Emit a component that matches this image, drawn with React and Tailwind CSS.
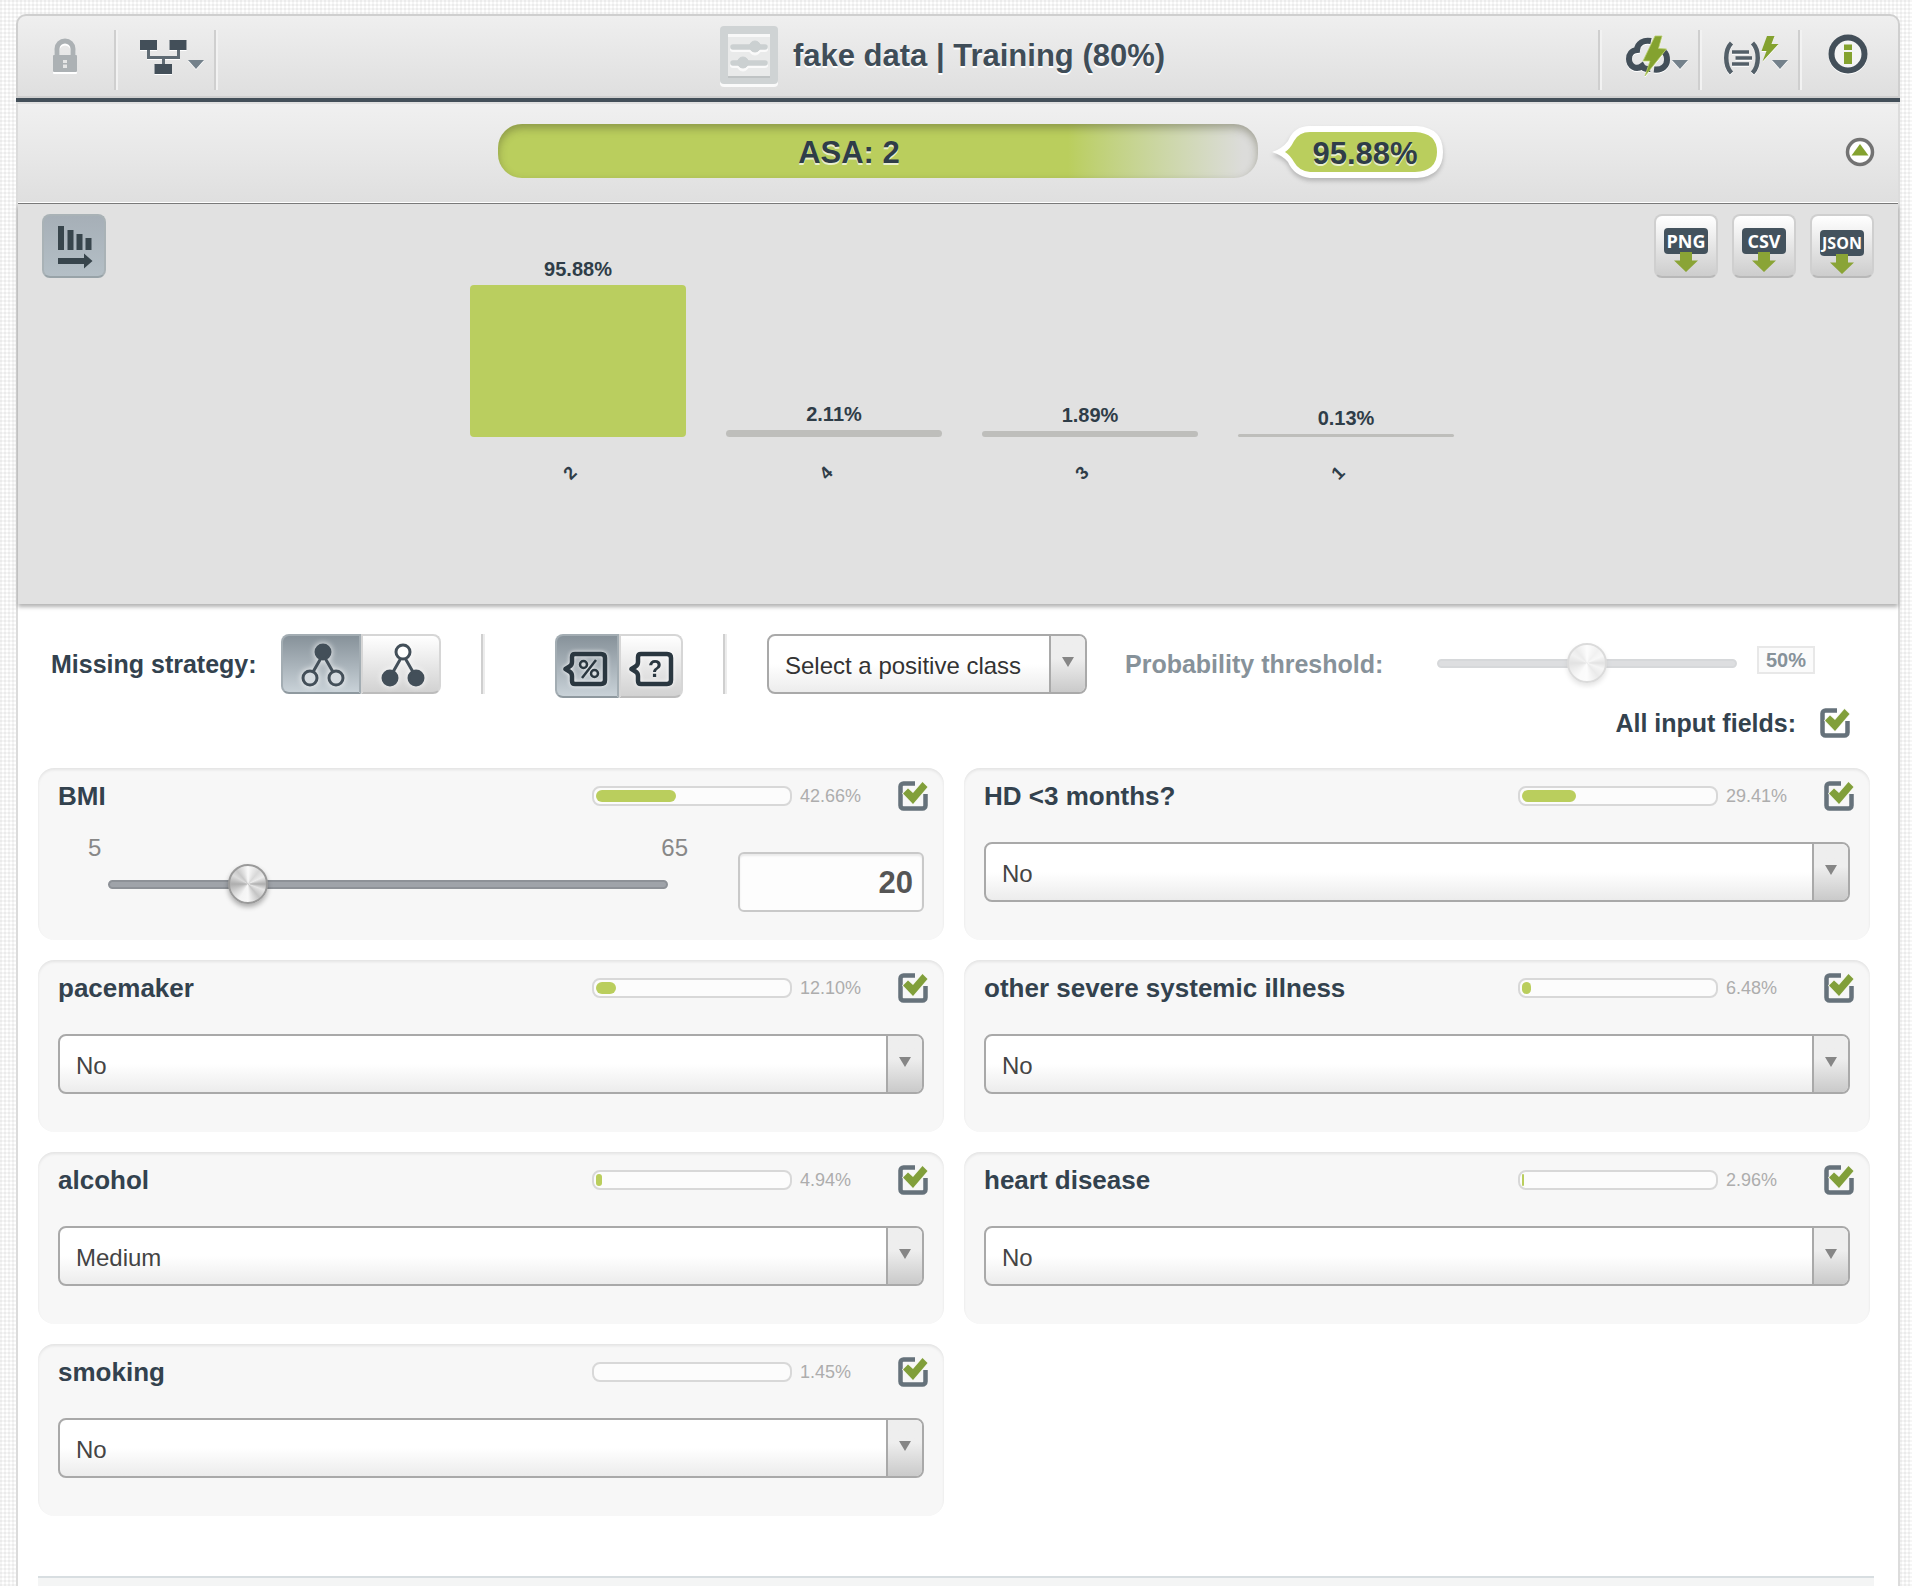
import { useState } from "react";

const DARK = "#434f59";
const GREEN = "#84a22f";

function Separator() {
  return <span className="h-[60px] w-1 shrink-0 border-l-2 border-r-2 border-l-[#cfcfcf] border-r-[#f2f2f2]" />;
}

function ToolButton({ label, children, className = "pl-5" }) {
  return (
    <button type="button" aria-label={label} className={`flex h-[60px] w-24 items-start pt-1 ${className}`}>
      {children}
    </button>
  );
}

function LockIcon() {
  return (
    <svg width="30" height="44" viewBox="0 0 30 44" className="drop-shadow-[0_2px_0_#fff]" aria-hidden="true">
      <path d="M7 23V15a8 8 0 0 1 16 0v8" fill="none" stroke="#acb1b4" strokeWidth="5" />
      <rect x="3" y="21" width="24" height="17" rx="1" fill="#acb1b4" />
      <path d="M13 26h4v3h-4zM13 30.500h4v3.500h-4z" fill="#e6e6e6" />
    </svg>
  );
}

function NetworkIcon() {
  return (
    <svg width="68" height="44" viewBox="-2 0 68 44" className="drop-shadow-[0_1px_0_#fff]" aria-hidden="true">
      <path d="M8.500 15v8.500h30V15M23.500 23v8" fill="none" stroke="#5f6b74" strokeWidth="3" />
      <path d="M0 6h17v10H0zM29.500 6h17v10h-17zM14.500 30H32v10H14.500z" fill={DARK} />
      <path d="M48 26h16l-8 9z" fill="#74818b" />
    </svg>
  );
}

function CloudIcon() {
  return (
    <svg width="68" height="44" viewBox="-2 0 68 44" className="drop-shadow-[0_1px_0_#fff]" aria-hidden="true">
      <path
        d="M27 7C20 5.500 13.500 9 13 16C7.500 16.500 5 20.500 5 25C5 32 12 36.500 18 32C19.500 34.500 22 35.500 26 35M30 35.500C39 36.500 43 31 43 26C43 22 42 19.500 40 18"
        fill="none"
        stroke={DARK}
        strokeWidth="6"
      />
      <path d="M31 2h7l-3.500 12.500 8 .5L21 42l5-15h-7z" fill={GREEN} stroke="#b7cd6c" strokeWidth="0.800" />
      <path d="M48 26h16l-8 9z" fill="#74818b" />
    </svg>
  );
}

function FormulaIcon() {
  return (
    <svg width="68" height="44" viewBox="0 0 68 44" className="drop-shadow-[0_1px_0_#fff]" aria-hidden="true">
      <path d="M9.500 9C2.500 16 2.500 32 9.500 39M30.500 9C37.500 16 37.500 32 30.500 39" fill="none" stroke="#535f68" strokeWidth="4.500" />
      <path d="M10 18h17M13.500 24H30M10 30h17" stroke="#535f68" strokeWidth="3.500" />
      <path d="M45 2h7.500L49.500 10h7L40.500 27.500 44.500 17h-5z" fill={GREEN} />
      <path d="M50 26h16l-8 9z" fill="#74818b" />
    </svg>
  );
}

function InfoIcon() {
  return (
    <svg width="44" height="44" viewBox="0 0 44 44" className="drop-shadow-[0_1px_0_#fff]" aria-hidden="true">
      <circle cx="22" cy="20" r="16.500" fill="#f4f4f4" stroke={DARK} strokeWidth="6" />
      <path d="M18 10.500h8v5.500h-8zM18 18h8v12h-8z" fill={GREEN} />
    </svg>
  );
}

function PanelIcon() {
  return (
    <svg width="60" height="64" viewBox="0 0 60 64" aria-hidden="true">
      <rect x="1" y="4" width="58" height="59" rx="4" fill="#fafafa" />
      <rect x="1" y="2" width="58" height="58" rx="4" fill="#cfd3d4" />
      <rect x="9" y="10" width="42" height="44" fill="#e9eaea" />
      <path d="M9 10h42v3H9z" fill="#f8f8f8" />
      <path d="M9 52h42v2H9z" fill="#bfc3c4" />
      <g fill="#fafafa" stroke="#fafafa" strokeLinecap="round">
        <path d="M14 25h32M14 41h32" strokeWidth="6" />
        <circle cx="36" cy="25" r="6" />
        <circle cx="24" cy="41" r="6" />
      </g>
      <g fill="#cbd0d1" stroke="#cbd0d1" strokeLinecap="round">
        <path d="M14 23h32M14 39h32" strokeWidth="5.500" />
        <circle cx="36" cy="22.500" r="5.500" />
        <circle cx="24" cy="38.500" r="5.500" />
      </g>
    </svg>
  );
}

function Header() {
  return (
    <header className="border-b-4 border-[#434f59]">
      <div className="grid h-[84px] grid-cols-[1fr_auto_1fr] rounded-t-[10px] border-2 border-[#cfcfcf] bg-linear-to-b from-[#efefef] to-[#dfdfdf]">
        <div className="flex pt-[14px]">
          <ToolButton label="Private" className="pl-8">
            <LockIcon />
          </ToolButton>
          <Separator />
          <ToolButton label="Models">
            <NetworkIcon />
          </ToolButton>
          <Separator />
        </div>
        <div className="flex items-start gap-[14px] pr-8 pt-2">
          <PanelIcon />
          <h1 className="pt-3 text-[31px] leading-10 font-bold whitespace-nowrap text-[#3f4d58] [text-shadow:0_2px_0_#fff]">
            fake data | Training (80%)
          </h1>
        </div>
        <div className="flex justify-end pt-[14px]">
          <Separator />
          <ToolButton label="Cloud actions">
            <CloudIcon />
          </ToolButton>
          <Separator />
          <ToolButton label="Scripts">
            <FormulaIcon />
          </ToolButton>
          <Separator />
          <ToolButton label="Information" className="pl-6">
            <InfoIcon />
          </ToolButton>
        </div>
      </div>
    </header>
  );
}

function Prediction() {
  return (
    <section className="border-b border-[#7b7b7b]">
      <div className="grid h-[101px] grid-cols-[1fr_auto_1fr] border-t-2 border-b border-t-[#e0e0e0] border-b-white bg-linear-to-b from-[#f0f0f0] via-[#e8e8e8] to-[#dfdfdf] pt-5">
        <span />
        <div className="flex gap-[14px] pl-[26px] font-bold text-[#2f3d48] [text-shadow:0_2px_0_rgba(255,255,255,0.700)]">
          <div className="h-[54px] w-[760px] rounded-3xl bg-linear-to-r from-[#bace5d] from-75% to-[#dcdcda] to-98% pr-[58px] text-center text-[31px] leading-[58px] shadow-[inset_0_4px_8px_rgba(70,70,40,0.400)]">
            ASA: 2
          </div>
          <div className="relative h-[54px] w-[172px]">
            <svg width="172" height="60" viewBox="0 0 172 60" className="absolute inset-0 drop-shadow-[0_3px_2px_rgba(0,0,0,0.200)]" aria-hidden="true">
              <path
                d="M0 28Q10 25 16 17Q22 2 38 2H145Q171 4 171 28Q171 52 145 54H38Q22 52 16 38Q10 31 0 28Z"
                fill="#fff"
              />
              <path
                d="M13 28Q18 25 22 17Q27 8 38 8H143Q165 9 165 28Q165 47 143 48H38Q27 47 22 38Q18 31 13 28Z"
                fill="#bace5d"
              />
            </svg>
            <span className="relative block pl-[14px] text-center text-[31px] leading-[60px]">95.88%</span>
          </div>
        </div>
        <div className="flex justify-end pt-[13px] pr-[23px]">
          <button type="button" aria-label="Collapse details" className="size-[30px]">
            <svg width="30" height="30" viewBox="0 0 30 30" aria-hidden="true">
              <circle cx="15" cy="15" r="12.500" fill="#fff" stroke="#737373" strokeWidth="3.500" />
              <path d="M15 7l8.500 11.500h-17z" fill={GREEN} />
            </svg>
          </button>
        </div>
      </div>
    </section>
  );
}

const CLASSES = [
  { name: "2", share: "95.88%", height: 152, first: true },
  { name: "4", share: "2.11%", height: 7 },
  { name: "3", share: "1.89%", height: 6 },
  { name: "1", share: "0.13%", height: 3 },
];

function ExportButton({ format }) {
  const small = format.length > 3;
  return (
    <button
      type="button"
      aria-label={`Export ${format}`}
      className={`flex size-16 flex-col items-center rounded-lg border-2 border-[#cfcfcf] border-b-[#b8b8b8] bg-linear-to-b from-white to-[#cdcdcd] ${small ? "pt-[14px]" : "pt-3"}`}
    >
      <span
        className={`h-[26px] w-11 rounded bg-[#43525d] text-center font-['Open_Sans',sans-serif] leading-[26px] font-bold text-white ${small ? "text-[16px]" : "text-[18px]"}`}
      >
        {format}
      </span>
      <svg width="24" height="20" viewBox="0 0 24 20" className="-mt-0.5" aria-hidden="true">
        <path d="M6 0h12v8.500h6L12 20 0 8.500h6z" fill="#8aa436" />
      </svg>
    </button>
  );
}

function Distribution() {
  return (
    <section className="grid h-[400px] grid-cols-[1fr_auto_1fr] bg-[#e1e1e1] px-6 pt-[10px] shadow-[0_3px_4px_rgba(0,0,0,0.300)]">
      <div>
        <button
          type="button"
          aria-label="Sort classes"
          className="size-16 rounded-lg border-2 border-[#a9b2b6] border-b-[#98a3a8] bg-linear-to-b from-[#a6afb7] to-[#b4bfc6]"
        >
          <svg width="60" height="60" viewBox="2 2 60 60" aria-hidden="true">
            <path d="M16 12h6v24h-6zM25.500 16h6v20h-6zM34.500 20h6v16h-6zM43.500 24h6v12h-6zM16 44h26v-4.500L50.500 47 42 54.500V50H16z" fill="#38454c" />
          </svg>
        </button>
      </div>
      <div className="flex gap-10 pl-2 text-center font-bold text-[#2f3d48]">
        {CLASSES.map((c) => (
          <div key={c.name} className="w-[216px]">
            <div className="flex h-[223px] flex-col justify-end gap-1">
              <span className="text-xl leading-6">{c.share}</span>
              <div
                className={c.first ? "rounded bg-[#bace5f]" : "rounded bg-[#bebebb]"}
                style={{ height: c.height }}
              />
            </div>
            <div className="flex justify-center pt-6 pr-4">
              <span className="-rotate-45 text-lg leading-6">{c.name}</span>
            </div>
          </div>
        ))}
      </div>
      <div className="flex justify-end gap-[14px]">
        <ExportButton format="PNG" />
        <ExportButton format="CSV" />
        <ExportButton format="JSON" />
      </div>
    </section>
  );
}

const ON = "border-[#a3adb3] border-b-[#8f999f] bg-linear-to-b from-[#87929a] to-[#c9d2d8]";
const OFF = "border-[#d6d6d6] border-b-[#bcbcbc] bg-linear-to-b from-white to-[#d2d2d2]";

function StrategyIcon({ rootFilled }) {
  const top = rootFilled ? DARK : "#fff";
  const leaf = rootFilled ? "#d5dbe0" : DARK;
  return (
    <svg width="76" height="56" viewBox="2 2 76 56" className="drop-shadow-[0_0_3px_#fff]" aria-hidden="true">
      <g stroke={DARK} strokeWidth="3">
        <path d="M40 24l-8 14M44 24l8 14" />
        <circle cx="42" cy="18" r="7" fill={top} />
        <circle cx="29" cy="44" r="7" fill={leaf} />
        <circle cx="55" cy="44" r="7" fill={leaf} />
      </g>
    </svg>
  );
}

function TagIcon({ kind }) {
  const percent = kind === "percent";
  return (
    <svg width="60" height="60" viewBox={percent ? "2 2 60 60" : "0 2 60 60"} className="drop-shadow-[0_0_2px_#fff]" aria-hidden="true">
      <path
        d="M20 20h26q4 0 4 4v22q0 4-4 4H20q-3 0-3-3v-5q0-3-2.500-4.500l-4-2.500 4-2.500q2.500-1.500 2.500-4.500v-5q0-3 3-3z"
        fill="none"
        stroke="#2a3740"
        strokeWidth="4.500"
        strokeLinejoin="round"
      />
      {percent ? (
        <g fill="none" stroke="#2a3740" strokeWidth="2.500">
          <circle cx="28.500" cy="30.500" r="3.500" />
          <circle cx="39.500" cy="39.500" r="3.500" />
          <path d="M41 26L27 44" />
        </g>
      ) : (
        <text x="34" y="43" textAnchor="middle" fontSize="23" fontWeight="700" fill="#2a3740">
          ?
        </text>
      )}
    </svg>
  );
}

function Select({ label, value, options = [], textClass = "text-[#444]" }) {
  return (
    <div className="relative">
      <select
        aria-label={label}
        defaultValue={value}
        className={`block h-[60px] w-full appearance-none rounded-lg border-2 border-[#a9a9a9] bg-linear-to-b from-white from-50% to-[#ececec] pt-1 pr-10 pl-4 text-[24px] ${textClass}`}
      >
        {[value, ...options].map((o) => (
          <option key={o}>{o}</option>
        ))}
      </select>
      <span className="pointer-events-none absolute inset-y-0.5 right-0.5 flex w-9 justify-center rounded-r-md border-l-2 border-[#a9a9a9] bg-linear-to-b from-[#eee] from-40% to-[#cacaca] pt-[21px]">
        <svg width="12" height="10" viewBox="0 0 12 10" aria-hidden="true">
          <path d="M0 0h12L6 10z" fill="#868686" />
        </svg>
      </span>
    </div>
  );
}

function Slider({ label, min, max, value, disabled, className }) {
  return (
    <div className={`grid items-center ${className} ${disabled ? "opacity-35" : ""}`}>
      <span className="col-start-1 row-start-1 mx-5 h-[9px] rounded-full border-2 border-[#8d9197] bg-[#9fa3a9]" />
      <input
        type="range"
        aria-label={label}
        min={min}
        max={max}
        defaultValue={value}
        disabled={disabled}
        className="relative col-start-1 row-start-1 h-[42px] w-full appearance-none bg-transparent [&::-webkit-slider-thumb]:size-10 [&::-webkit-slider-thumb]:appearance-none [&::-webkit-slider-thumb]:rounded-full [&::-webkit-slider-thumb]:border-2 [&::-webkit-slider-thumb]:border-[#9a9a9a] [&::-webkit-slider-thumb]:bg-[conic-gradient(#fafafa,#d8d8d8_40deg,#ececec_65deg,#aeaeae_90deg,#e6e6e6_110deg,#c4c4c4_140deg,#f8f8f8_180deg,#f4f4f4_210deg,#d4d4d4_240deg,#aeaeae_270deg,#dcdcdc_300deg,#c8c8c8_320deg,#fafafa)] [&::-webkit-slider-thumb]:shadow-[0_3px_5px_rgba(0,0,0,0.300)]"
      />
    </div>
  );
}

function CheckBox({ id, label }) {
  const [checked, setChecked] = useState(true);
  return (
    <span className="grid size-[30px] shrink-0">
      <input
        id={id}
        type="checkbox"
        aria-label={label}
        checked={checked}
        onChange={(e) => setChecked(e.target.checked)}
        className="col-start-1 row-start-1 size-[30px] appearance-none"
      />
      <svg width="30" height="30" viewBox="0 0 30 30" className="pointer-events-none col-start-1 row-start-1" aria-hidden="true">
        <path
          d="M17 2.500H5.500a3 3 0 0 0-3 3v19a3 3 0 0 0 3 3h19a3 3 0 0 0 3-3V13"
          fill="none"
          stroke="#66727b"
          strokeWidth="4.500"
        />
        {checked && (
          <path d="M5 12.500l5-5 5 4.500L24.500 1l5 5L15 23z" fill="#819f3a" stroke="#f4f6ef" strokeWidth="1.500" paintOrder="stroke" />
        )}
      </svg>
    </span>
  );
}

function Controls() {
  return (
    <section className="pt-[30px] pr-12 pl-[33px] text-[25px] leading-[30px] font-bold text-[#33424e]">
      <div className="flex h-16 items-start">
        <span className="w-[230px] pt-[15px] whitespace-nowrap">Missing strategy:</span>
        <div className="flex">
          <button type="button" aria-label="Last prediction" className={`h-[60px] w-20 rounded-l-lg border-2 ${ON}`}>
            <StrategyIcon rootFilled />
          </button>
          <button type="button" aria-label="Proportional" className={`h-[60px] w-20 rounded-r-lg border-2 ${OFF}`}>
            <StrategyIcon />
          </button>
        </div>
        <span className="mr-[70px] ml-10 h-[60px] w-1 border-l-2 border-r-2 border-l-[#cfcfcf] border-r-[#ececec]" />
        <div className="flex">
          <button type="button" aria-label="Probability" className={`size-16 rounded-l-lg border-2 ${ON}`}>
            <TagIcon kind="percent" />
          </button>
          <button type="button" aria-label="Confidence" className={`size-16 rounded-r-lg border-2 ${OFF}`}>
            <TagIcon kind="question" />
          </button>
        </div>
        <span className="mr-10 ml-10 h-[60px] w-1 border-l-2 border-r-2 border-l-[#cfcfcf] border-r-[#ececec]" />
        <div className="w-80 font-normal">
          <Select label="Positive class" value="Select a positive class" options={["1", "2", "3", "4"]} textClass="text-[#333]" />
        </div>
        <span className="ml-[38px] w-[292px] pt-[15px] whitespace-nowrap text-[#87929a]">Probability threshold:</span>
        <div className="flex">
          <Slider label="Probability threshold" min={0} max={100} value={50} disabled className="mt-2 h-[42px] w-[340px]" />
          <output className="mt-3 h-7 w-[58px] border-2 border-[#e8e8e8] bg-[#fbfbfb] text-center text-xl leading-[25px] text-[#87929a]">
            50%
          </output>
        </div>
      </div>
      <div className="flex items-center justify-end gap-6 pt-[10px]">
        <label htmlFor="all-fields">All input fields:</label>
        <CheckBox id="all-fields" />
      </div>
    </section>
  );
}

const FIELDS = [
  { name: "BMI", weight: "42.66%", fill: 80, slider: true },
  { name: "HD <3 months?", weight: "29.41%", fill: 54, value: "No", options: ["Yes"] },
  { name: "pacemaker", weight: "12.10%", fill: 20, value: "No", options: ["Yes"] },
  { name: "other severe systemic illness", weight: "6.48%", fill: 9, value: "No", options: ["Yes"] },
  { name: "alcohol", weight: "4.94%", fill: 6, value: "Medium", options: ["Low", "High"] },
  { name: "heart disease", weight: "2.96%", fill: 2, value: "No", options: ["Yes"] },
  { name: "smoking", weight: "1.45%", fill: 0, value: "No", options: ["Yes"] },
];

function FieldCard({ field }) {
  return (
    <article className="h-[172px] rounded-2xl bg-[#f7f7f7] px-5 pt-3 shadow-[inset_0_2px_3px_rgba(0,0,0,0.080)]">
      <div className="-mr-1 flex h-8 items-center">
        <h2 className="flex-1 text-[26px] leading-[30px] font-bold whitespace-nowrap text-[#33424e]">{field.name}</h2>
        <div className="h-5 w-[200px] rounded-lg border-2 border-[#d8d8d8] bg-[#fcfcfc] p-0.5">
          <div className="h-3 rounded-md bg-[#bace5d]" style={{ width: field.fill }} />
        </div>
        <span className="w-[106px] pl-2 text-lg leading-5 text-[#adadad]">{field.weight}</span>
        <CheckBox label={`Use ${field.name}`} />
      </div>
      {field.slider ? (
        <div className="flex justify-between">
          <div className="w-[640px] pt-[21px] pl-[30px]">
            <div className="flex justify-between pr-[10px] text-[24px] leading-[30px] text-[#888]">
              <span>5</span>
              <span>65</span>
            </div>
            <Slider label={field.name} min={5} max={65} value={20} className="w-[600px]" />
          </div>
          <input
            type="text"
            aria-label="BMI value"
            defaultValue="20"
            className="mt-10 h-[60px] w-[186px] shrink-0 rounded-md border-2 border-[#c9c9c9] bg-[#fdfdfd] px-[9px] pt-0.5 text-right text-[31px] font-bold text-[#555] shadow-[inset_0_2px_2px_rgba(0,0,0,0.080)]"
          />
        </div>
      ) : (
        <div className="pt-[30px]">
          <Select label={field.name} value={field.value} options={field.options} />
        </div>
      )}
    </article>
  );
}

export default function App() {
  return (
    <div className="min-h-screen bg-white bg-[linear-gradient(rgba(0,0,0,0.040)_50%,transparent_50%),linear-gradient(90deg,rgba(0,0,0,0.040)_50%,transparent_50%)] bg-[size:4px_4px] pt-[14px] pr-3 pl-4 font-['Liberation_Sans',Arial,sans-serif]">
      <Header />
      <main className="border-x-2 border-[#dcdcdc] bg-white">
        <Prediction />
        <Distribution />
        <Controls />
        <div className="grid grid-cols-2 gap-5 pt-[30px] pr-7 pb-[60px] pl-5">
          {FIELDS.map((f) => (
            <FieldCard key={f.name} field={f} />
          ))}
        </div>
        <div className="mr-6 ml-5 h-[10px] border-t-2 border-[#d8dee1] bg-[#f4f5f5]" />
      </main>
    </div>
  );
}
